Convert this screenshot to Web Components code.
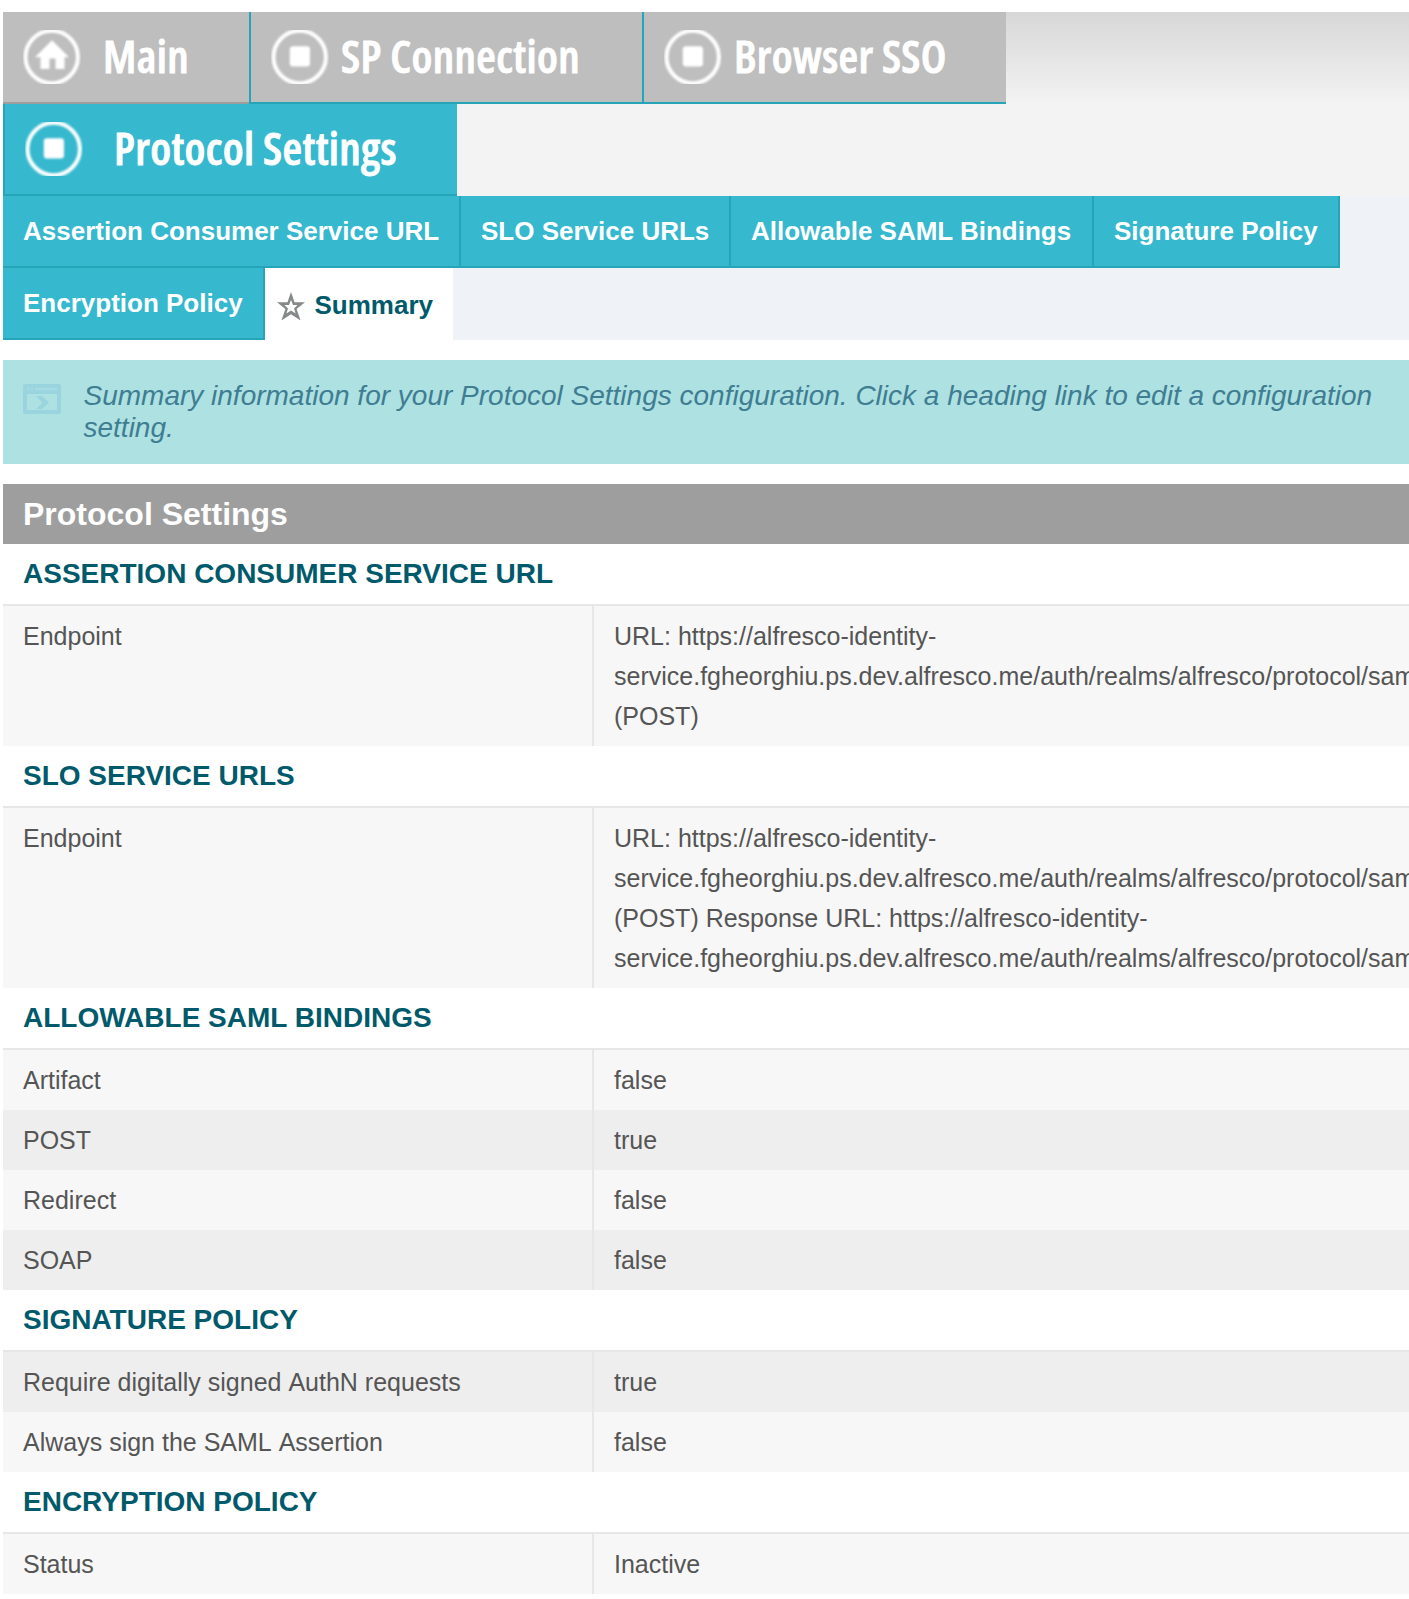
<!DOCTYPE html>
<html lang="en">
<head>
<meta charset="utf-8">
<title>Protocol Settings</title>
<style>
  html, body { margin: 0; background: #fff; }
  body { font-family: "Liberation Sans", Arial, sans-serif; overflow: hidden; }
</style>
</head>
<body>
<summary-page></summary-page>
<script>
const define = (name, html) => {
  const template = document.createElement('template');
  template.innerHTML = html;
  customElements.define(name, class extends HTMLElement {
    constructor() {
      super();
      this.attachShadow({ mode: 'open' }).append(template.content.cloneNode(true));
    }
  });
};

const ring = inner => `
  <style>:host { display: block; flex: none; width: 58px; height: 54px; overflow: hidden; } svg { display: block; } g { filter: blur(.8px); }</style>
  <svg width="58" height="54" viewBox="0 0 58 54" fill="none">
    <g><circle cx="28.700" cy="27" r="26.200" stroke="#fff" stroke-width="4"/>
    ${inner}</g>
  </svg>`;

define('ring-home', ring(`<path d="M29 10.300 46 27.300H41.500V39h-9V28.500h-6V39h-9V27.300H12z" fill="#fff"/>`));
define('ring-step', ring(`<rect x="18.800" y="16.200" width="20.200" height="20.200" rx="3" fill="#fff"/>`));

define('star-icon', `
  <style>:host { display: block; flex: none; } svg { display: block; } g { filter: blur(.6px); }</style>
  <svg width="28" height="28" viewBox="0 0 28 28">
    <g><path fill="#858989" d="M14 0 17.500 10.300H28L19.600 17l4 11.500L14 22.300 4.400 28.500l4-11.500L0 10.300h10.500z"/>
    <path fill="#fff" d="M14 8 16 13H20.500L17 16.500l1.600 5L14 18.600l-4.600 2.900 1.600-5L7.500 13H12z"/></g>
  </svg>`);

define('window-icon', `
  <style>:host { display: block; flex: none; } svg { display: block; }</style>
  <svg width="38" height="30" viewBox="0 0 38 30">
    <path fill="#9ad4df" fill-rule="evenodd" d="M2 0h34q2 0 2 2v26q0 2-2 2H2q-2 0-2-2V2q0-2 2-2zM4 10v16h30V10z"/>
    <path stroke="#a6dce1" stroke-width="2.400" d="M12 5h22M4 5h2M8 5h2"/>
    <path fill="#9ad4df" d="M13 12h6l7 6.500-7 6.500h-6l6.500-6.500z"/>
  </svg>`);

define('crumb-tab', `
  <style>
    :host { display: flex; align-items: flex-start; box-sizing: border-box; height: 92px; flex: none;
      width: var(--w); padding: 18px 0 0 20px; background: #bebebe;
      border-bottom: 2px solid #26a4b8; color: #fff; }
    :host([first]) { border-bottom-color: #9e9e9e; }
    :host([divided]) { border-left: 2px solid #26a4b8; }
    :host([current]) { background: #36b8ce; }
    span { margin: -1px 0 0 var(--gap); white-space: nowrap; font: 600 45px/54px "Open Sans", sans-serif;
      font-stretch: 75%; letter-spacing: .35px; -webkit-text-stroke: .8px #fff; }
  </style>
  <slot name="icon"></slot><span><slot></slot></span>`);

define('crumb-bar', `
  <style>
    :host { display: flex; flex-wrap: wrap; align-content: flex-start; height: 184px;
      background: linear-gradient(#d7d7d7, #f3f3f3 92px); }
  </style><slot></slot>`);

define('step-tab', `
  <style>
    :host { display: flex; align-items: flex-start; box-sizing: border-box; height: 72px; flex: none;
      width: var(--w); padding: 20px 0 0 20px; background: #36b8ce; color: #fff; white-space: nowrap;
      border-right: 2px solid #26a4b8; border-bottom: 2px solid #26a4b8; font: bold 26px/30px "Liberation Sans", Arial, sans-serif; }
    :host([current]) { background: #fff; color: #005a6b; border: 0; padding: 22px 0 0 12px; }
    span { margin-left: var(--gap, 0); }
  </style>
  <slot name="icon"></slot><span><slot></slot></span>`);

define('step-bar', `
  <style>
    :host { display: flex; flex-wrap: wrap; align-content: flex-start; height: 144px; background: #eff3f8; }
  </style><slot></slot>`);

define('info-banner', `
  <style>
    :host { display: flex; box-sizing: border-box; height: 104px; margin: 20px 0; padding: 20px 0 0 20px;
      background: #aee1e1; color: #3f7d93; }
    window-icon { margin-top: 4px; }
    p { margin: 0 0 0 22.500px; width: 1300px; font: italic 28px/32px "Liberation Sans", Arial, sans-serif; }
  </style>
  <window-icon></window-icon><p><slot></slot></p>`);

define('panel-title', `
  <style>:host { display: block; height: 60px; padding-left: 20px; background: #9e9e9e; color: #fff;
    font: bold 32px/60px "Liberation Sans", Arial, sans-serif; }</style><slot></slot>`);

define('summary-section', `
  <style>
    :host { display: block; }
    h2 { margin: 0; height: 60px; padding-left: 20px; color: #005a6b; border-bottom: 2px solid #e7e7e7;
      font: bold 28px/60px "Liberation Sans", Arial, sans-serif; }
  </style>
  <h2><slot name="title"></slot></h2><slot></slot>`);

define('summary-row', `
  <style>
    :host { display: grid; grid-template-columns: 589px 1fr; background: #f7f7f7; color: #555;
      font: 25px/40px "Liberation Sans", Arial, sans-serif; font-kerning: none; }
    :host([shaded]) { background: #eee; }
    div { padding: 10px 0 10px 20px; }
    .value { border-left: 2px solid #e7e7e7; white-space: nowrap; overflow: hidden; font-kerning: normal; }
  </style>
  <div><slot name="label"></slot></div><div class="value"><slot name="value"></slot></div>`);

const row = (label, value, shaded) =>
  `<summary-row${shaded ? ' shaded' : ''}><span slot="label">${label}</span><span slot="value" style="font-kerning:normal">${value}</span></summary-row>`;
const host = 'URL: https://alfresco-identity-<br>service.fgheorghiu.ps.dev.alfresco.me/auth/realms/alfresco/protocol/sam<br>(POST)';

define('summary-page', `
  <style>:host { display: block; box-sizing: border-box; padding: 12px 0 0 3px; width: 1409px; height: 1599px; overflow: hidden; }</style>
  <crumb-bar>
    <crumb-tab first style="--w:246px;--gap:22px"><ring-home slot="icon"></ring-home>Main</crumb-tab>
    <crumb-tab divided style="--w:393px;--gap:12px"><ring-step slot="icon"></ring-step>SP Connection</crumb-tab>
    <crumb-tab divided style="--w:364px;--gap:12px"><ring-step slot="icon"></ring-step>Browser SSO</crumb-tab>
    <crumb-tab divided current style="--w:454px;--gap:31px"><ring-step slot="icon"></ring-step>Protocol Settings</crumb-tab>
  </crumb-bar>
  <step-bar>
    <step-tab style="--w:458px">Assertion Consumer Service URL</step-tab>
    <step-tab style="--w:270px">SLO Service URLs</step-tab>
    <step-tab style="--w:363px">Allowable SAML Bindings</step-tab>
    <step-tab style="--w:246px">Signature Policy</step-tab>
    <step-tab style="--w:262px">Encryption Policy</step-tab>
    <step-tab current style="--w:188px;--gap:9.500px"><star-icon slot="icon" style="margin-top:2px"></star-icon>Summary</step-tab>
  </step-bar>
  <info-banner>Summary information for your Protocol Settings configuration. Click a heading link to edit a configuration setting.</info-banner>
  <panel-title>Protocol Settings</panel-title>
  <summary-section><span slot="title">ASSERTION CONSUMER SERVICE URL</span>${row('Endpoint', host)}</summary-section>
  <summary-section><span slot="title">SLO SERVICE URLS</span>${row('Endpoint', host + ' Response ' + host.replace('<br>(POST)', ''))}</summary-section>
  <summary-section><span slot="title">ALLOWABLE SAML BINDINGS</span>${row('Artifact', 'false')}${row('POST', 'true', 1)}${row('Redirect', 'false')}${row('SOAP', 'false', 1)}</summary-section>
  <summary-section><span slot="title">SIGNATURE POLICY</span>${row('Require digitally signed AuthN requests', 'true', 1)}${row('Always sign the SAML Assertion', 'false')}</summary-section>
  <summary-section><span slot="title">ENCRYPTION POLICY</span>${row('Status', 'Inactive')}</summary-section>`);
</script>
</body>
</html>
